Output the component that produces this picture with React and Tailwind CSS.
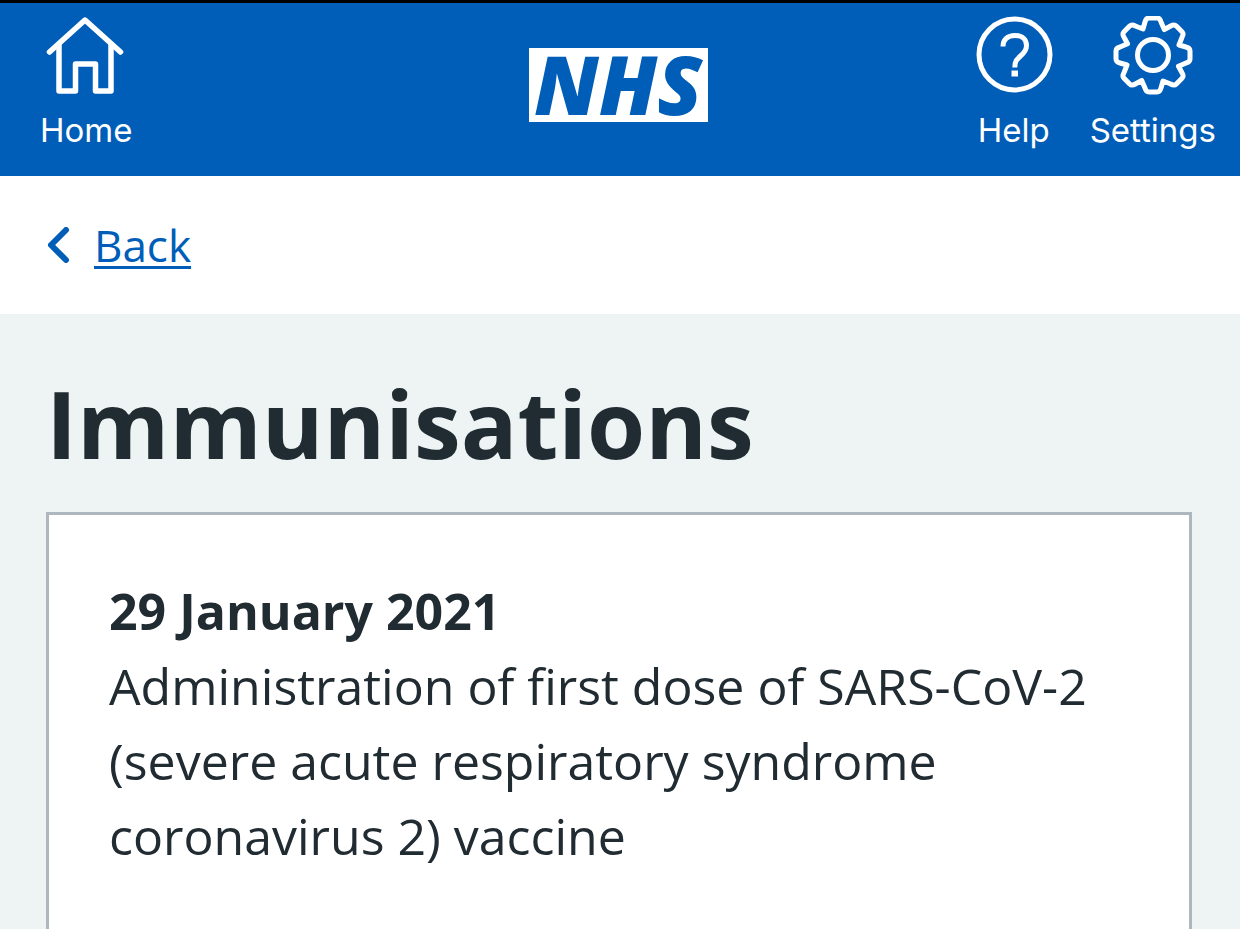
const GEAR_TEETH = [0, 45, 90, 135, 180, 225, 270, 315];

// One tooth, drawn around the origin and turned once for every 45 degrees
const TOOTH = [
  [-10, -26],
  [-8, -33],
  [-7, -37],
  [-4, -37],
  [4, -37],
  [7, -37],
  [8, -33],
];

function turn([x, y], degrees) {
  const angle = (degrees * Math.PI) / 180;
  const px = x * Math.cos(angle) - y * Math.sin(angle);
  const py = x * Math.sin(angle) + y * Math.cos(angle);
  return `${(px + 40).toFixed(2)} ${(py + 40).toFixed(2)}`;
}

const gearPath = `${GEAR_TEETH.map((degrees, index) => {
  const p = TOOTH.map((point) => turn(point, degrees));
  return `${index === 0 ? "M" : "L"}${p[0]}L${p[1]}Q${p[2]} ${p[3]}L${p[4]}Q${p[5]} ${p[6]}`;
}).join("")}Z`;

function HomeIcon() {
  return (
    <svg
      className="h-20 w-20"
      viewBox="0 0 80 80"
      fill="none"
      stroke="currentColor"
      strokeWidth="5.5"
      strokeLinecap="round"
      strokeLinejoin="round"
      aria-hidden="true"
    >
      <path d="M3.500 36 39 4 74.500 36" />
      <path d="M13 29V75H29.500V48H49.500V75H65V29" />
    </svg>
  );
}

function HelpIcon() {
  return (
    <svg
      className="h-20 w-20"
      viewBox="0 0 80 80"
      fill="none"
      stroke="currentColor"
      strokeWidth="5"
      aria-hidden="true"
    >
      <circle cx="40.500" cy="38.500" r="35.500" />
      <path d="M29 30.500C29 23.500 33.500 19.500 41 19.500S52.500 23.500 52.500 29.500C52.500 34.500 50 37 46.500 40C42.500 43.500 40.800 45.500 40.800 51.500" />
      <path d="M37.500 57.500H44" strokeWidth="6" />
    </svg>
  );
}

function SettingsIcon() {
  return (
    <svg
      className="h-20 w-20"
      viewBox="0 0 80 80"
      fill="none"
      stroke="currentColor"
      strokeWidth="5"
      strokeLinejoin="round"
      aria-hidden="true"
    >
      <g transform="translate(0 -1)">
        <path d={gearPath} />
        <circle cx="40" cy="40" r="15.500" />
      </g>
    </svg>
  );
}

function HeaderLink({ href, icon, label }) {
  return (
    <a href={href} className="flex flex-col items-center gap-[14px]">
      {icon}
      <span className="font-['Inter',sans-serif] text-[33px] leading-10">
        {label}
      </span>
    </a>
  );
}

function Header() {
  return (
    <header className="grid grid-cols-[1fr_auto_1fr] items-start border-t-3 border-black bg-[#005eb8] pt-[13px] pr-6 pb-[26px] pl-5 text-white">
      <div className="flex pl-5">
        <HeaderLink href="#home" icon={<HomeIcon />} label="Home" />
      </div>
      <a
        href="#nhs"
        className="mt-8 flex h-[74px] w-[179px] items-center justify-center bg-white pb-1 text-[82px] leading-none font-extrabold text-[#005eb8] italic"
      >
        NHS
      </a>
      <div className="flex justify-end gap-9">
        <HeaderLink href="#help" icon={<HelpIcon />} label="Help" />
        <HeaderLink href="#settings" icon={<SettingsIcon />} label="Settings" />
      </div>
    </header>
  );
}

function BackLink() {
  return (
    <nav className="flex h-[138px] items-center bg-white px-12">
      <a href="#back" className="flex items-center gap-6 text-[#005eb8]">
        <svg
          className="h-9 w-[22px]"
          viewBox="0 0 22 36"
          fill="none"
          stroke="currentColor"
          strokeWidth="6"
          strokeLinecap="round"
          strokeLinejoin="round"
          aria-hidden="true"
        >
          <path d="M18 3 3 18 18 33" />
        </svg>
        <span className="text-[44px] leading-[60px] underline decoration-3 underline-offset-4">
          Back
        </span>
      </a>
    </nav>
  );
}

function ImmunisationCard({ date, description }) {
  return (
    <article className="flex-1 border-3 border-b-0 border-[#aeb7bd] bg-white px-15 py-[59px] text-[50px] leading-[75px]">
      <h2 className="font-bold">{date}</h2>
      <p className="[font-variant-ligatures:none]">{description}</p>
    </article>
  );
}

export default function App() {
  return (
    <div className="flex min-h-screen flex-col bg-[#eef4f4] font-['Open_Sans',sans-serif] text-[#212b32]">
      <Header />
      <BackLink />
      <main className="flex flex-1 flex-col pt-11 pr-12 pl-[46px]">
        <h1 className="mb-6 text-[94px] leading-[130px] font-bold">
          Immunisations
        </h1>
        <ImmunisationCard
          date="29 January 2021"
          description="Administration of first dose of SARS-CoV-2 (severe acute respiratory syndrome coronavirus 2) vaccine"
        />
      </main>
    </div>
  );
}
